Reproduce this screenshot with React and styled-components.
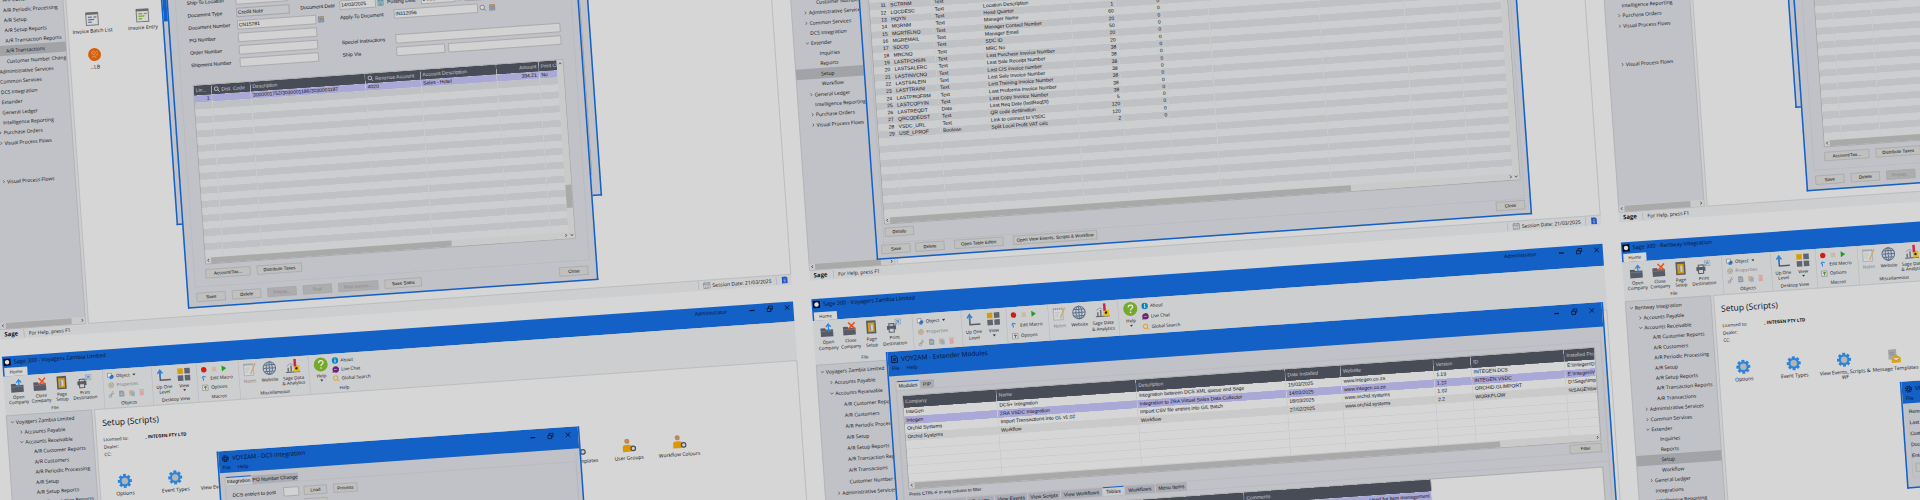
import React from "react";
import styled, { createGlobalStyle, css } from "styled-components";

const c = {
  white: "#d6d6d6",
  ribbon: "#cdced0",
  panel: "#c1c2c7",
  blue: "#1360c6",
  dark: "#484c57",
  light: "#cdcecf",
  stripe: "#c0c1c5",
  picked: "#aaa8d6",
  selected: "#a2a3a7",
  line: "#a4a5a8",
  faint: "#b4b5ba",
  thumb: "#a9a9a9",
  text: "#101116",
};

const ui = `"Open Sans", "Noto Sans", sans-serif`;
const form = `"Liberation Sans", Arial, sans-serif`;

const Global = createGlobalStyle`
  * { box-sizing: border-box; }
  body { margin: 0; background: ${c.white}; overflow: hidden; }
  button, input { font: inherit; color: inherit; margin: 0; }
  ul { list-style: none; margin: 0; padding: 0; }
  a { color: inherit; text-decoration: none; }
`;

/* The wall of desktops: drawn at double size, tilted and shown at half scale. */
const Page = styled.main`
  width: 100%;
  height: 100vh;
  overflow: hidden;
  background: ${c.white};
  color: ${c.text};
  font: 9px/12px ${ui};
`;
const Wall = styled.div`
  display: grid;
  grid-auto-flow: column;
  grid-auto-columns: 82.6vw;
  column-gap: 37px;
  width: max-content;
  transform-origin: 0 0;
  transform: rotate(-4deg) scale(0.5) translate(-46px, -28px);
`;
const Column = styled.div`
  display: flex;
  flex-direction: column;
  gap: ${(p) => p.$gap}px;
  padding-top: ${(p) => p.$top}px;
`;
const Screen = styled.section`
  position: relative;
  display: flex;
  flex-direction: column;
  height: ${(p) => (p.$upper ? 698 : 640)}px;
  background: ${c.ribbon};
`;
const Body = styled.div`
  flex: 1;
  display: flex;
  gap: 5px;
  min-height: 0;
`;
const Side = styled.nav`
  width: 172px;
  display: flex;
  flex-direction: column;
  background: ${c.panel};
  border: 1px solid ${c.line};
  padding-top: ${(p) => p.$top}px;
  font-size: 10px;
`;
const Content = styled.div`
  flex: 1;
  background: ${c.white};
  border: 1px solid ${c.line};
  padding: ${(p) => p.$pad};
`;

const Branch = styled.ul`
  display: flex;
  flex-direction: column;
  height: ${(p) => p.$height}px;
  margin-top: ${(p) => p.$gap || 0}px;
`;
const Leaf = styled.li`
  flex: 1;
  display: flex;
  align-items: center;
  white-space: nowrap;
  overflow: hidden;
  padding-left: ${(p) => 7 + p.$level * 16}px;
  background: ${(p) => (p.$on ? c.selected : "transparent")};
  a { padding-left: 3px; }
`;
const Chevron = styled.svg`
  width: 8px;
  height: 8px;
  flex: none;
  fill: none;
  stroke: #3c3d42;
  stroke-width: 1.2;
`;

function Tree({ items, height, gap }) {
  return (
    <Branch $height={height} $gap={gap}>
      {items.map(([level, text, state, on], i) => (
        <Leaf key={i} $level={level} $on={on}>
          <Chevron viewBox="0 0 8 8">
            {state === "+" && <path d="M3 1l2.5 3L3 7" />}
            {state === "-" && <path d="M1 2.5l3 3 3-3" />}
          </Chevron>
          <a href="#tree">{text}</a>
        </Leaf>
      ))}
    </Branch>
  );
}

/* Scroll bars */
const Bar = styled.div`
  flex: none;
  display: flex;
  align-items: center;
  justify-content: space-between;
  height: 13px;
  margin-top: ${(p) => (p.$end ? "auto" : 0)};
  background: #cacaca;
  svg { width: 11px; height: 9px; flex: none; fill: none; stroke: #3a3a3a; stroke-width: 1.4; }
`;
const Thumb = styled.div`
  width: ${(p) => p.$size};
  height: 12px;
  margin-right: auto;
  background: ${c.thumb};
`;
function HScroll({ size, end }) {
  return (
    <Bar $end={end}>
      <svg viewBox="0 0 8 8"><path d="M5 1.5L3 4l2 2.500" /></svg>
      <Thumb $size={size} />
      <svg viewBox="0 0 8 8"><path d="M3 1.500L5 4 3 6.500" /></svg>
    </Bar>
  );
}
const VBar = styled.div`
  flex: none;
  display: flex;
  flex-direction: column;
  justify-content: space-between;
  align-items: center;
  width: 12px;
  padding: 2px 0;
  background: #cacaca;
  svg { width: 9px; height: 9px; fill: none; stroke: #3a3a3a; stroke-width: 1.4; }
`;
const VThumb = styled.div`
  width: 12px;
  height: 46px;
  margin: auto 0 50px;
  background: ${c.thumb};
`;
function VScroll({ thumb }) {
  return (
    <VBar>
      <svg viewBox="0 0 8 8"><path d="M1.500 5L4 3l2.500 2" /></svg>
      {thumb && <VThumb />}
      <svg viewBox="0 0 8 8"><path d="M1.500 3L4 5l2.500-2" /></svg>
    </VBar>
  );
}

/* Status bar */
const Status = styled.footer`
  display: flex;
  align-items: center;
  height: 20px;
  padding: 0 6px 0 8px;
  white-space: nowrap;
  font-size: 10px;
  strong { font-size: 12px; width: 39px; }
  time { margin: 0 9px 0 4px; }
  svg { width: 15px; height: 14px; }
`;
const Divider = styled.i`
  width: 1px;
  height: 16px;
  background: ${c.line};
  margin-right: 9px;
  margin-left: ${(p) => (p.$push ? "auto" : 0)};
`;
function StatusBar() {
  return (
    <Status>
      <strong>Sage</strong>
      <Divider />
      <span>For Help, press F1</span>
      <Divider $push />
      <svg viewBox="0 0 15 14" fill="none" stroke="#6a6b70">
        <rect x="1" y="2" width="13" height="11" />
        <path d="M1 5h13M4 0v3M11 0v3M4 8h2M8 8h3M4 11h2M8 11h3" />
      </svg>
      <time>Session Date: 21/03/2025</time>
      <Divider />
      <svg viewBox="0 0 15 14">
        <path d="M2 0h8l3 3v11H2z" fill="#2350c0" />
        <path d="M5 5h5M5 8h5M5 11h5" stroke="#cfd6ea" />
      </svg>
    </Status>
  );
}

/* Title bars */
const Head = styled.header`
  height: ${(p) => (p.$tall ? 44 : 40)}px;
  display: flex;
  flex-direction: column;
  justify-content: space-between;
  background: ${c.blue};
  color: #0a1226;
`;
const Caption = styled.div`
  display: flex;
  align-items: center;
  height: 22px;
  padding: 0 6px 0 2px;
  gap: 6px;
  white-space: nowrap;
  font-size: ${(p) => p.$size || 11}px;
`;
const User = styled.span`
  margin-left: auto;
  margin-right: 38px;
  font-size: 10px;
`;
const Buttons = styled.div`
  display: flex;
  gap: 22px;
  margin-left: ${(p) => (p.$push ? "auto" : 0)};
  svg { display: block; width: 13px; height: 13px; fill: none; stroke: #0d1424; stroke-width: 1.5; }
`;
const Bare = styled.button`
  border: 0;
  padding: 0;
  background: none;
`;
function WindowButtons({ push }) {
  return (
    <Buttons $push={push}>
      <Bare aria-label="Minimise"><svg viewBox="0 0 12 12"><path d="M1 7h9" strokeWidth="2.200" /></svg></Bare>
      <Bare aria-label="Restore"><svg viewBox="0 0 12 12"><path d="M1 5h7v6H1zM4 5V1h7v6H8" /></svg></Bare>
      <Bare aria-label="Close"><svg viewBox="0 0 12 12"><path d="M2 2l8 8M10 2l-8 8" /></svg></Bare>
    </Buttons>
  );
}
const Home = styled.button`
  width: 46px;
  height: 17px;
  margin-left: 3px;
  border: 0;
  padding: 0;
  background: ${c.white};
  color: ${c.text};
  line-height: 12px;
`;
const Mark = styled.svg`
  width: 15px;
  height: 15px;
`;

/* Ribbon */
const Strip = styled.div`
  display: flex;
  height: ${(p) => (p.$tall ? 88 : 78)}px;
  background: ${c.ribbon};
  --step: ${(p) => (p.$tall ? 12 : 10)}px;
  --row: ${(p) => (p.$tall ? 21 : 18)}px;
`;
const Group = styled.div`
  display: flex;
  flex-direction: column;
  width: ${(p) => p.$w}px;
  padding-bottom: 3px;
  > span { text-align: center; margin-top: auto; line-height: 12px; }
  & + & { border-left: 1px solid ${c.faint}; }
`;
const Tools = styled.div`
  display: flex;
  padding: 5px 0 0 ${(p) => p.$left || 0}px;
`;
const Tool = styled.button`
  display: flex;
  flex-direction: column;
  align-items: center;
  width: ${(p) => p.$w}px;
  border: 0;
  padding: 0;
  background: none;
  line-height: var(--step);
  opacity: ${(p) => (p.$dim ? 0.5 : 1)};
  svg { width: 30px; height: 30px; margin-bottom: 3px; }
`;
const Stack = styled.div`
  display: flex;
  flex-direction: column;
`;
const Line = styled.button`
  display: flex;
  align-items: center;
  height: var(--row);
  gap: 4px;
  border: 0;
  padding: 0;
  background: none;
  white-space: nowrap;
  opacity: ${(p) => (p.$dim ? 0.5 : 1)};
  svg { width: 14px; height: 14px; }
`;
const Icons = styled.div`
  display: flex;
  align-items: center;
  height: var(--row);
  gap: 6px;
  svg { width: 14px; height: 14px; opacity: ${(p) => (p.$dim ? 0.5 : 1)}; }
`;
const Arrow = styled.i`
  width: 0;
  height: 0;
  margin: 2px;
  border: 3px solid transparent;
  border-top: 4px solid #333;
  border-bottom: 0;
`;

const art = {
  open: (
    <svg viewBox="0 0 30 30"><path d="M1 11h9l2 3h14v14H1z" fill="#565b66" /><path d="M1 17h25" stroke="#8b8f98" /><path d="M17 18V4M12 9l5-6 5 6" fill="none" stroke="#2e86dc" strokeWidth="2.500" /></svg>
  ),
  close: (
    <svg viewBox="0 0 30 30"><path d="M1 11h9l2 3h14v14H1z" fill="#565b66" /><path d="M1 17h25" stroke="#8b8f98" /><path d="M12 3l13 13M25 3L12 16" stroke="#e8501c" strokeWidth="3" /></svg>
  ),
  page: (
    <svg viewBox="0 0 30 30"><path d="M6 2h19v26H6z" fill="#565b66" /><path d="M9 6h13v19H9z" fill="#d99b0a" /><path d="M12 10h7v12h-7z" fill="#cdced0" /><path d="M12 10h3v12h-3z" fill="#8a8e96" /></svg>
  ),
  print: (
    <svg viewBox="0 0 30 30"><path d="M1 15h18v8H1z" fill="#565b66" /><path d="M5 11h10v5H5zM5 20h10v8H5z" fill="#cdced0" stroke="#565b66" strokeWidth="2" /><path d="M18 3h11v10H18z" fill="none" stroke="#6f7f96" strokeDasharray="3 1" /><path d="M16 15l9-9M20 6h5v5" fill="none" stroke="#3d7fc4" strokeWidth="1.500" /></svg>
  ),
  up: (
    <svg viewBox="0 0 30 30"><path d="M8 6v18h21" fill="none" stroke="#565b66" strokeWidth="3" /><path d="M8 19V5M3 11l5-7 5 7" fill="none" stroke="#2e86dc" strokeWidth="3" /></svg>
  ),
  view: (
    <svg viewBox="0 0 30 30"><path d="M3 3h11v11H3z" fill="#d99b0a" /><path d="M17 3h11v11H17zM3 17h11v11H3zM17 17h11v11H17z" fill="#5f646e" /></svg>
  ),
  notes: (
    <svg viewBox="0 0 30 30"><path d="M4 5h19v22H4z" fill="#dcdcdc" stroke="#7f838c" strokeWidth="1.500" /><path d="M4 5h19" stroke="#565b66" strokeWidth="4" strokeDasharray="2 2" /><path d="M7 12h10M7 16h8M7 20h6" stroke="#8d9098" /><path d="M27 3L17 24" stroke="#c98a1b" strokeWidth="3" /></svg>
  ),
  web: (
    <svg viewBox="0 0 30 30" fill="none" stroke="#5d6f86" strokeWidth="2"><circle cx="15" cy="15" r="12.500" fill="#c3ccd6" /><ellipse cx="15" cy="15" rx="6" ry="12.500" /><path d="M3 15h24M5 8.500h20M5 21.500h20M15 3v24" /></svg>
  ),
  data: (
    <svg viewBox="0 0 30 30"><path d="M1 26h28" stroke="#565b66" strokeWidth="2" /><path d="M4 17h3v8H4zM10 13h3v12h-3z" fill="#6d727c" /><path d="M17 13h11v13H17z" fill="#e2b81c" /><path d="M17 0h5v15h-5z" fill="#d0244d" /><circle cx="22" cy="19" r="2.500" fill="#2b2620" /><path d="M3 13l7-4 5 2" fill="none" stroke="#6d727c" /></svg>
  ),
  help: (
    <svg viewBox="0 0 30 30"><circle cx="15" cy="15" r="14" fill="#76a82c" /><path d="M11 12c0-6 9-6 9-1 0 4-5 3-5 7" fill="none" stroke="#e8eedd" strokeWidth="2.600" /><circle cx="15" cy="22" r="1.700" fill="#e8eedd" /></svg>
  ),
};

function Ribbon({ tall }) {
  return (
    <Strip $tall={tall}>
      <Group $w={198}>
        <Tools $left={6}>
          <Tool $w={44}>{art.open}Open<br />Company</Tool>
          <Tool $w={46}>{art.close}Close<br />Company</Tool>
          <Tool $w={38}>{art.page}Page<br />Setup</Tool>
          <Tool $w={54}>{art.print}Print<br />Destination</Tool>
        </Tools>
        <span>File</span>
      </Group>
      <Group $w={98}>
        <Tools $left={8}>
          <Stack>
            <Line>
              <svg viewBox="0 0 14 14"><path d="M1 1h8v8H1z" fill="#e8e8e8" stroke="#565b66" /><path d="M5 7h6v6H5z" fill="#2e86dc" /><circle cx="10" cy="8" r="3.500" fill="#2e70b8" /></svg>
              Object <Arrow />
            </Line>
            <Line $dim>
              <svg viewBox="0 0 14 14"><circle cx="7" cy="7" r="4.500" fill="none" stroke="#a07828" strokeWidth="3" strokeDasharray="2.500 1" /><circle cx="7" cy="7" r="3" fill="#909090" /></svg>
              Properties
            </Line>
            <Icons $dim>
              <svg viewBox="0 0 14 14"><path d="M10 1L5 9M12 5L6 9" stroke="#555" strokeWidth="1.500" /><circle cx="4" cy="11" r="2.500" fill="none" stroke="#555" strokeWidth="1.500" /></svg>
              <svg viewBox="0 0 14 14"><path d="M2 1h7l3 3v9H2z" fill="#50617a" /><path d="M4 6h6M4 9h6" stroke="#ddd" /></svg>
              <svg viewBox="0 0 14 14"><path d="M2 2h9v10H2z" fill="#d68a24" /><path d="M6 5h7v9H6z" fill="#4c8fd0" /></svg>
              <svg viewBox="0 0 14 14"><path d="M3 4h8v10H3zM2 1h10v2H2z" fill="#e07f70" /></svg>
            </Icons>
          </Stack>
        </Tools>
        <span>Objects</span>
      </Group>
      <Group $w={90}>
        <Tools>
          <Tool $w={46}>{art.up}Up One<br />Level</Tool>
          <Tool $w={34}>{art.view}View<Arrow /></Tool>
        </Tools>
        <span>Desktop View</span>
      </Group>
      <Group $w={84}>
        <Tools $left={8}>
          <Stack>
            <Icons>
              <svg viewBox="0 0 14 14"><circle cx="6" cy="7" r="5.500" fill="#d81c0c" /></svg>
              <svg viewBox="0 0 14 14"><path d="M2 3h9v9H2z" fill="#c9bba8" /></svg>
              <svg viewBox="0 0 14 14"><path d="M2 1l9 6-9 6z" fill="#1ea01c" /></svg>
            </Icons>
            <Line>
              <svg viewBox="0 0 14 14"><path d="M4 11V5M1 6l3-4 5 2" fill="none" stroke="#2e86dc" strokeWidth="2" /></svg>
              Edit Macro
            </Line>
            <Line>
              <svg viewBox="0 0 14 14"><path d="M1 2h11v11H1z" fill="#d8d8d8" stroke="#777" /><path d="M7 4v7M4 6h6" stroke="#4d8a2b" strokeWidth="2" /></svg>
              Options
            </Line>
          </Stack>
        </Tools>
        <span>Macros</span>
      </Group>
      <Group $w={140}>
        <Tools>
          <Tool $w={42} $dim>{art.notes}Notes</Tool>
          <Tool $w={38}>{art.web}Website</Tool>
          <Tool $w={56}>{art.data}Sage Data<br />&amp; Analytics</Tool>
        </Tools>
        <span>Miscellaneous</span>
      </Group>
      <Group $w={138}>
        <Tools $left={2}>
          <Tool $w={44}>{art.help}Help<Arrow /></Tool>
          <Stack>
            <Line>
              <svg viewBox="0 0 14 14"><circle cx="7" cy="7" r="6.500" fill="#0b86bc" /><path d="M7 6v5M7 3v2" stroke="#e6eef2" strokeWidth="2" /></svg>
              About
            </Line>
            <Line>
              <svg viewBox="0 0 14 14"><path d="M7 .500a6.500 6.500 0 1 1-3 12L.500 13.500l.700-4A6.500 6.500 0 0 1 7 .500z" fill="#6e2377" /><path d="M4 7h6" stroke="#e6dce8" strokeWidth="1.500" strokeDasharray="1.500 1" /></svg>
              Live Chat
            </Line>
            <Line>
              <svg viewBox="0 0 14 14" fill="none" stroke="#dc9a1a" strokeWidth="1.800"><circle cx="6" cy="6" r="4.500" /><path d="M9 9l4 4.500" /></svg>
              Global Search
            </Line>
          </Stack>
        </Tools>
        <span>Help</span>
      </Group>
    </Strip>
  );
}

function SageHead({ title, tall }) {
  return (
    <Head $tall={tall}>
      <Caption>
        <Mark viewBox="0 0 15 15"><path d="M0 0h15v15H0z" fill="#0a0d12" /><circle cx="7.500" cy="7.500" r="4.500" fill="#dfe3e6" /></Mark>
        <span>{title}</span>
        <User>Administrator</User>
        <WindowButtons />
      </Caption>
      <Home>Home</Home>
    </Head>
  );
}

/* Desktop icons */
const Heading = styled.h1`
  margin: 0;
  font: 400 17px/24px ${ui};
`;
const Licence = styled.dl`
  display: grid;
  grid-template-columns: 84px auto;
  grid-auto-rows: 15px;
  margin: 16px 0 31px;
  dt, dd { margin: 0; }
  dt { grid-column: 1; }
  dd { font-weight: 700; grid-column: 2; grid-row: 1; }
`;
const Shelf = styled.ul`
  display: grid;
  grid-auto-flow: column;
  grid-auto-columns: 101px;
  margin-left: -14px;
  margin-bottom: ${(p) => p.$gap || 0}px;
  font-size: 10px;
`;
const Shortcut = styled.li`
  display: flex;
  flex-direction: column;
  align-items: center;
  text-align: center;
  line-height: 10px;
  margin: 0 -6px;
  svg { width: 30px; height: 30px; margin-bottom: 4px; }
`;
const teeth = [0, 45, 90, 135, 180, 225, 270, 315];
const Gear = () => (
  <svg viewBox="0 0 30 30">
    {teeth.map((a) => (
      <path key={a} d="M12 1h6v6h-6z" fill="#2c84da" transform={`rotate(${a} 15 15)`} />
    ))}
    <circle cx="15" cy="15" r="8.500" fill="#b5b5b5" stroke="#2c84da" strokeWidth="4" />
  </svg>
);
const Person = () => (
  <svg viewBox="0 0 30 30">
    <circle cx="12" cy="6" r="5" fill="#bb8a58" />
    <path d="M3 27V17q0-4 5-4h8q5 0 5 4v10z" fill="#dc9804" />
    <circle cx="24" cy="21" r="4.500" fill="#cfcfcf" stroke="#4c5058" strokeWidth="2.500" />
  </svg>
);
const Mail = () => (
  <svg viewBox="0 0 30 30">
    <path d="M3 1h16v20H3z" fill="#a5a6a8" />
    <path d="M6 7h9M6 11h9" stroke="#74767a" />
    <path d="M9 18l9-6 9 6v10H9z" fill="#dda016" />
    <path d="M10 19l8 5 8-5" fill="#dcdcdc" stroke="#b07d10" />
  </svg>
);
const Sheet = ({ tone }) => (
  <svg viewBox="0 0 30 30">
    <path d="M3 3h24v25H3z" fill="#d4d5d2" stroke="#77797c" strokeWidth="2" />
    <path d="M3 5h24" stroke="#66686c" strokeWidth="4" />
    <path d="M7 12h8M7 17h12M7 22h7M18 12h6" stroke={tone} strokeWidth="2.500" />
  </svg>
);
const Ball = () => (
  <svg viewBox="0 0 30 30">
    <circle cx="15" cy="15" r="13" fill="#d4600f" />
    <path d="M9 10l5-2 3 4-4 4zM17 17l5-3M10 20l5-2 3 4M19 8l3 3" fill="none" stroke="#e9a877" strokeWidth="1.500" />
  </svg>
);

const modules = [
  ["Options", Gear], ["Event Types", Gear], ["View Events, Scripts & WF", Gear], ["Message Templates", Mail],
  ["Reports", Gear], ["Scripts", Gear], ["Tables", Gear], ["Modules", Gear], ["Profiles", Gear],
  ["Users Templates", Person], ["User Groups", Person], ["Workflow Colours", Person],
];

function SetupContent() {
  return (
    <Content $pad="15px 0 0 13px">
      <Heading>Setup (Scripts)</Heading>
      <Licence>
        <dt>Licensed to:</dt><dd>, INTEGEN PTY LTD</dd>
        <dt>Dealer:</dt>
        <dt>CC:</dt>
      </Licence>
      <Shelf>
        {modules.map(([name, Icon]) => (
          <Shortcut key={name}><Icon />{name}</Shortcut>
        ))}
      </Shelf>
    </Content>
  );
}

/* Application windows on the desktops */
const Window = styled.section`
  position: absolute;
  left: ${(p) => p.$x}px;
  top: ${(p) => p.$y}px;
  width: ${(p) => p.$w}px;
  height: ${(p) => p.$h}px;
  display: flex;
  flex-direction: column;
  border: 3px solid ${c.blue};
  border-top: 0;
  background: ${c.panel};
  font-family: ${form};
  overflow: hidden;
`;
const WindowHead = styled.header`
  flex: none;
  height: ${(p) => p.$h}px;
  padding: ${(p) => p.$pad || 0}px 8px 0 4px;
  background: ${c.blue};
  color: #0a1226;
  font-family: ${ui};
`;
const Menu = styled.div`
  display: flex;
  gap: 14px;
  padding-left: 3px;
  font-size: 10px;
  line-height: 14px;
`;
function DialogHead({ title, height, pad, size, page }) {
  return (
    <WindowHead $h={height} $pad={pad}>
      <Caption $size={size}>
        <Mark viewBox="0 0 16 16" fill="none" stroke="#0b1730" strokeWidth="2">
          {page ? <path d="M2 1h8l4 4v10H2zM5 7h6M5 10h6" /> : (
            <>
              <circle cx="8" cy="8" r="6" strokeWidth="3" strokeDasharray="3 1.700" />
              <circle cx="8" cy="8" r="3" />
            </>
          )}
        </Mark>
        <span>{title}</span>
        <WindowButtons push />
      </Caption>
      <Menu><Bare>File</Bare><Bare>Help</Bare></Menu>
    </WindowHead>
  );
}
const Frame = styled.div`
  display: flex;
  flex-direction: column;
  flex: ${(p) => (p.$grow ? 1 : "none")};
  margin: ${(p) => p.$margin};
  padding: ${(p) => p.$pad};
  border: 1px solid ${c.faint};
  border-top-width: ${(p) => (p.$top ? 1 : 0)}px;
`;
const Actions = styled.div`
  display: flex;
  gap: ${(p) => p.$gap || 13}px;
  margin: ${(p) => p.$margin};
`;
const Push = styled.button`
  flex: none;
  width: ${(p) => p.$w || 58}px;
  height: 18px;
  padding: 0;
  margin-left: ${(p) => (p.$end ? "auto" : 0)};
  border: 1px solid #9a9b9d;
  background: #c0c0bf;
  font-size: 9px;
  line-height: 14px;
  white-space: nowrap;
  ${(p) => p.disabled && css`background: #adadae; border-color: #a4a4a5; color: #85868a;`}
`;

/* Forms */
const Fields = styled.div`
  display: flex;
  align-items: center;
  height: 25px;
  white-space: nowrap;
  font-size: 10px;
`;
const Cell = styled.div`
  display: flex;
  align-items: center;
  width: ${(p) => (p.$w ? `${p.$w}px` : "auto")};
  flex: none;
`;
const Label = styled.label`
  width: ${(p) => p.$w}px;
  flex: none;
  padding-left: ${(p) => p.$pad || 0}px;
`;
const Box = styled.input`
  flex: none;
  width: ${(p) => p.$w}px;
  height: 18px;
  padding: 0 2px;
  margin-right: ${(p) => p.$after || 0}px;
  border: 1px solid #88898c;
  background: ${(p) => (p.$off ? "#c3c4c8" : "#d2d2d2")};
  border-radius: 0;
  outline: 0;
`;
const Glyph = styled.svg`
  width: 14px;
  height: 14px;
  flex: none;
  margin: 0 2px 0 3px;
`;
const Lens = () => (
  <Glyph viewBox="0 0 14 14" fill="none" stroke="#707378" strokeWidth="1.500"><circle cx="6" cy="6" r="4.500" fill="#d6d6d6" /><path d="M9.500 9.500l3.500 3.500" /></Glyph>
);
const Calendar = () => (
  <Glyph viewBox="0 0 14 14"><path d="M2 2h10v11H2z" fill="#b8d0d4" stroke="#3d7078" /><path d="M2 4h10M4 8h6M4 10.500h6" stroke="#2c7784" strokeWidth="1.500" /></Glyph>
);
const Drill = () => (
  <Glyph viewBox="0 0 14 14"><path d="M2 2h10v11H2z" fill="#a8aebc" stroke="#555c6e" /><path d="M4 6h6M4 9h6" stroke="#444c66" /><path d="M7 1h6v3H7z" fill="#c8913e" /></Glyph>
);

/* Tables */
const Sheetbox = styled.div`
  display: flex;
  width: ${(p) => p.$w};
  flex: none;
  border: 1px solid #88898b;
  background: ${c.light};
`;
const Pane = styled.div`
  flex: 1;
  min-width: 0;
  overflow: hidden;
`;
const Table = styled.table`
  width: 100%;
  height: ${(p) => p.$h}px;
  table-layout: fixed;
  border-collapse: collapse;
  font-size: ${(p) => p.$size || 9}px;
  line-height: 10px;
  white-space: nowrap;
  th, td { padding: 0 4px; overflow: hidden; text-align: left; font-weight: 400; }
  th { height: ${(p) => p.$head}px; background: ${c.dark}; color: #c8cbd0; border-right: 1px solid #7a7d86; }
  th svg { width: 12px; height: 12px; vertical-align: -2px; margin-right: 4px; fill: none; stroke: #d2d4d8; stroke-width: 1.6; }
  td { height: ${(p) => p.$row || 14}px; border-right: 1px solid #c6c7c9; }
  .end { text-align: right; }
`;
const Row = styled.tr`
  background: ${(p) => ({ on: c.picked, dark: c.stripe, grey: "#cacaca", white: c.white }[p.$tone] || c.light)};
  ${(p) => p.$ruled && css`td { border-bottom: 1px solid #cbcbcc; }`}
`;
const Cols = ({ widths }) => (
  <colgroup>{widths.map((w, i) => <col key={i} style={{ width: w }} />)}</colgroup>
);
const Find = () => <svg viewBox="0 0 12 12"><circle cx="5" cy="5" r="3.800" /><path d="M8 8l3.500 3.500" /></svg>;

/* Tabs */
const Tabs = styled.div`
  display: flex;
  align-items: flex-end;
  gap: 2px;
  height: 18px;
  padding-left: ${(p) => p.$left}px;
  font-size: 10px;
`;
const Tab = styled.button`
  width: ${(p) => p.$w}px;
  height: ${(p) => (p.$on ? 18 : 17)}px;
  padding: 0;
  border: 0;
  border-top: ${(p) => (p.$on ? `2px solid ${c.blue}` : 0)};
  background: ${(p) => (p.$on ? "#c9cacd" : "#abacb3")};
  line-height: 14px;
  white-space: nowrap;
`;

function InvoiceWindow({ id }) {
  const f = (n) => `${id}-${n}`;
  const cols = [35, 78, 230, 111, 152, 85, 37];
  return (
    <Window $x={378} $y={0} $w={823} $h={662}>
      <WindowHead $h={24} />
      <Frame $grow $margin="0 12px 0 14px" $pad="16px 0 0 22px">
        <Fields>
          <Cell $w={286}>
            <Label $w={98} htmlFor={f("ship")}>Ship-To Location</Label>
            <Box $w={104} id={f("ship")} />
            <Lens />
            <Glyph viewBox="0 0 14 14"><path d="M7 1v12M1 7h12" stroke="#3f9a3c" strokeWidth="3" /></Glyph>
            <Glyph viewBox="0 0 14 14"><circle cx="7" cy="7" r="6" fill="#1f73c8" /><path d="M7 6v5M7 3v2" stroke="#e2e8ee" strokeWidth="2" /></Glyph>
          </Cell>
          <Box $w={140} $off aria-label="Location" />
        </Fields>
        <Fields>
          <Cell $w={226}>
            <Label $w={98} htmlFor={f("type")}>Document Type</Label>
            <Box $w={106} $off id={f("type")} defaultValue="Credit Note" />
          </Cell>
          <Label $w={79} htmlFor={f("date")}>Document Date</Label>
          <Box $w={72} id={f("date")} defaultValue="14/03/2025" />
          <Calendar />
          <Label $w={72} $pad={4} htmlFor={f("post")}>Posting Date</Label>
          <Box $w={68} id={f("post")} defaultValue="14/03/2025" />
          <Calendar />
          <Box $w={50} $off $after={8} aria-label="Period" defaultValue="2025 - 03" />
          <Label $w={56} htmlFor={f("cur")}>Currency</Label>
          <Box $w={56} $off id={f("cur")} />
        </Fields>
        <Fields>
          <Cell $w={304}>
            <Label $w={98} htmlFor={f("num")}>Document Number</Label>
            <Box $w={158} id={f("num")} defaultValue="CN15781" />
            <Drill />
          </Cell>
          <Label $w={108} htmlFor={f("apply")}>Apply-To Document</Label>
          <Box $w={168} id={f("apply")} defaultValue="IN112056" />
          <Lens />
          <Drill />
        </Fields>
        <Fields>
          <Label $w={98} htmlFor={f("po")}>PO Number</Label>
          <Box $w={158} id={f("po")} />
        </Fields>
        <Fields>
          <Cell $w={304}>
            <Label $w={98} htmlFor={f("order")}>Order Number</Label>
            <Box $w={158} id={f("order")} />
          </Cell>
          <Label $w={108} htmlFor={f("special")}>Special Instructions</Label>
          <Box $w={330} id={f("special")} />
        </Fields>
        <Fields>
          <Cell $w={304}>
            <Label $w={98} htmlFor={f("shipno")}>Shipment Number</Label>
            <Box $w={158} id={f("shipno")} />
          </Cell>
          <Label $w={108} htmlFor={f("via")}>Ship Via</Label>
          <Box $w={97} $after={7} id={f("via")} />
          <Box $w={226} aria-label="Ship via description" />
        </Fields>
        <Actions $gap={0} $margin="27px 0 10px 1px">
          <Sheetbox $w="742px">
            <Pane>
              <Table $h={344} $head={20} $size={10}>
                <Cols widths={cols} />
                <thead>
                  <tr>
                    <th>Lin...</th><th><Find />Dist. Code</th><th>Description</th><th><Find />Revenue Account</th>
                    <th>Account Description</th><th className="end">Amount</th><th>Print Co</th>
                  </tr>
                </thead>
                <tbody>
                  <Row $tone="on">
                    <td className="end">1</td><td /><td>3000001752/3030001186/3030001187</td><td>4020</td>
                    <td>Sales - Hotel</td><td className="end">394.21</td><td>No</td>
                  </Row>
                  {Array.from({ length: 22 }, (_, i) => (
                    <Row key={i} $tone={i % 2 ? "" : "dark"}>{cols.map((w, k) => <td key={k} />)}</Row>
                  ))}
                </tbody>
              </Table>
              <HScroll size="482px" />
            </Pane>
            <VScroll thumb />
          </Sheetbox>
        </Actions>
        <Actions $margin="0">
          <Push $w={90}>Account/Tax...</Push>
          <Push $w={90}>Distribute Taxes</Push>
        </Actions>
      </Frame>
      <Actions $margin="11px 16px 9px">
        <Push>Save</Push>
        <Push>Delete</Push>
        <Push disabled>Prepay...</Push>
        <Push disabled>Post</Push>
        <Push disabled $w={80}>Post Invoice...</Push>
        <Push $w={74}>Save Sales</Push>
        <Push $end>Close</Push>
      </Actions>
    </Window>
  );
}

const rows = [
  ["", "", "", "", "", ""],
  [11, "SCTRNM", "Text", "Sector Name", 60, 0],
  [12, "LOCDESC", "Text", "Location Description", 100, 0],
  [13, "HQYN", "Text", "Head Quarter", 1, 0],
  [14, "MGRNM", "Text", "Manager Name", 60, 0],
  [15, "MGRTELNO", "Text", "Manager Contact Number", 20, 0],
  [16, "MGREMAIL", "Text", "Manager Email", 50, 0],
  [17, "SDCID", "Text", "SDC ID", 20, 0],
  [18, "MRCNO", "Text", "MRC No", 20, 0],
  [19, "LASTPCHSIN", "Text", "Last Purchase Invoice Number", 38, 0],
  [20, "LASTSALERC", "Text", "Last Sale Receipt Number", 38, 0],
  [21, "LASTINVCNO", "Text", "Last CIS invoice number", 38, 0],
  [22, "LASTSALEIN", "Text", "Last Sale Invoice Number", 38, 0],
  [23, "LASTTRAINI", "Text", "Last Training Invoice Number", 38, 0],
  [24, "LASTPROFRM", "Text", "Last Proforma Invoice Number", 38, 0],
  [25, "LASTCOPYIN", "Text", "Last Copy Invoice Number", 38, 0],
  [26, "LASTREQDT", "Date", "Last Req Date (lastReqDt)", 5, 0],
  [27, "QRCODEDST", "Text", "QR code destination", 120, 0],
  [28, "VSDC_URL", "Text", "Link to connect to VSDC", 120, 0],
  [29, "USE_LPROF", "Boolean", "Split Local Profit VAT calc", 2, 0],
  ...Array.from({ length: 11 }, () => ["", "", "", "", "", ""]),
];

function TableWindow() {
  return (
    <Window $x={136} $y={74} $w={1314} $h={592}>
      <WindowHead $h={40} />
      <Frame $grow $margin="0 10px 0 13px" $pad="3px 5px 0 3px">
        <Sheetbox $w="100%">
          <Pane>
            <Table $h={464} $head={20} $size={10}>
              <Cols widths={[37, 88, 97, 179, 90, 92, 93, 221, 170, 106, 88]} />
              <thead>
                <tr><th>No.</th><th>Field</th><th>Type</th><th>Description</th><th>Length</th><th>Decimals</th><th /><th /><th /><th /><th /></tr>
              </thead>
              <tbody>
                {rows.map(([n, name, type, text, size, dec], i) => (
                  <Row key={i} $tone={i % 2 ? "dark" : ""}>
                    <td className="end">{n}</td><td>{name}</td><td>{type}</td><td>{text}</td>
                    <td className="end">{size}</td><td className="end">{dec}</td>
                    <td /><td /><td /><td /><td />
                  </Row>
                ))}
              </tbody>
            </Table>
            <HScroll size="924px" />
          </Pane>
          <VScroll />
        </Sheetbox>
        <Actions $margin="7px 0 0"><Push>Details</Push></Actions>
      </Frame>
      <Actions $margin="3px 10px 8px 8px" $gap={20}>
        <Actions $gap={10}>
          <Push>Save</Push>
          <Push>Delete</Push>
        </Actions>
        <Push $w={98}>Open Table Editor</Push>
        <Push $w={168}>Open View Events, Scripts &amp; Workflow</Push>
        <Push $end>Close</Push>
      </Actions>
    </Window>
  );
}

function IntegrationWindow() {
  return (
    <Window $x={415} $y={219} $w={727} $h={360}>
      <DialogHead title="VOYZAM - DCS Integration" height={44} pad={4} size={12} />
      <Frame $margin="8px 7px 0 9px" $pad="0">
        <Tabs $left={2}>
          <Tab $on $w={50}>Integration</Tab>
          <Tab $w={92}>PO Number Change</Tab>
        </Tabs>
        <Frame $top $margin="0" $pad="6px 0 200px 12px">
          <Fields>
            <Label $w={102} htmlFor="entries">DCS entries to post</Label>
            <Box $w={31} $after={10} id="entries" />
            <Actions><Push $w={46}>Load</Push><Push $w={48}>Process</Push></Actions>
          </Fields>
          <Fields>
            <Cell $w={143} />
            <Actions><Push $w={46}>Clear</Push></Actions>
          </Fields>
        </Frame>
      </Frame>
    </Window>
  );
}

const packs = [
  ["InteGen", "DCS+ Integration", "Integration between DCS XML queue and Sage", "15/03/2025", "www.integen.co.za", "1.19", "INTEGEN.DCS", "E:\\Integen\\D"],
  ["Integen", "ZRA VSDC Integration", "Integration to ZRA Virtual Sales Data Collector", "14/03/2025", "www.integen.co.za", "1.22", "INTEGEN.VSDC", "E:\\Integen\\V"],
  ["Orchid Systems", "Import Transactions into GL v1.02", "Import CSV file entries into G/L Batch", "18/03/2025", "www.orchid.systems", "1.02", "ORCHID.GLIMPORT", "D:\\Sage\\Imp"],
  ["Orchid Systems", "Workflow", "Workflow", "27/02/2025", "www.orchid.systems", "2.2", "WORKFLOW", "%SAGE%\\wf"],
];
const tones = ["white", "on", "white", "grey"];

const LowerTable = styled.div`
  background: ${c.white};
  border: 1px solid #88898b;
  padding-right: 344px;
`;

function ModulesWindow() {
  return (
    <Window $x={141} $y={116} $w={1438} $h={520}>
      <DialogHead title="VOYZAM - Extender Modules" height={49} pad={4} size={13} page />
      <Frame $margin="11px 6px 0 12px" $pad="0">
        <Tabs $left={2}>
          <Tab $on $w={44}>Modules</Tab>
          <Tab $w={28}>PIP</Tab>
        </Tabs>
        <Frame $top $margin="0" $pad="10px 12px 0 10px">
          <Sheetbox $w="100%">
            <Pane>
              <Table $h={173} $head={24} $row={16} $size={10}>
                <Cols widths={[187, 280, 299, 111, 186, 75, 187, 61]} />
                <thead>
                  <tr><th>Company</th><th>Name</th><th>Description</th><th>Date Installed</th><th>Website</th><th>Version</th><th>ID</th><th>Installed Fro</th></tr>
                </thead>
                <tbody>
                  {packs.map((p, i) => (
                    <Row key={i} $tone={tones[i]}>{p.map((t, k) => <td key={k}>{t}</td>)}</Row>
                  ))}
                  {[0, 1, 2, 3, 4].map((i) => (
                    <Row key={i} $tone="white" $ruled>{packs[0].map((t, k) => <td key={k} />)}</Row>
                  ))}
                </tbody>
              </Table>
              <HScroll size="1174px" />
            </Pane>
          </Sheetbox>
          <Actions $margin="4px 0 0">
            <span>Press CTRL-F in any column to filter</span>
            <Push $w={64} $end>Filter</Push>
          </Actions>
        </Frame>
        <Tabs $left={14}>
          <Tab $w={54}>Details</Tab>
          <Tab $w={54}>Forms</Tab>
          <Tab $w={54}>Reports</Tab>
          <Tab $w={64}>View Events</Tab>
          <Tab $w={64}>View Scripts</Tab>
          <Tab $w={82}>View Workflows</Tab>
          <Tab $w={42} $on>Tables</Tab>
          <Tab $w={60}>Workflows</Tab>
          <Tab $w={62}>Menu Items</Tab>
        </Tabs>
        <Frame $top $margin="0" $pad="10px 12px 0 10px">
          <LowerTable>
            <Table $h={80} $head={24} $size={10}>
              <Cols widths={[240, 425, 374]} />
              <thead><tr><th>Table</th><th>Description</th><th>Comments</th></tr></thead>
              <tbody>
                <Row $tone="on"><td>VSDCITEM</td><td /><td className="end">Used for item management</td></Row>
                <Row $tone="white" $ruled><td /><td /><td /></Row>
                <Row $tone="white" $ruled><td /><td /><td /></Row>
              </tbody>
            </Table>
          </LowerTable>
        </Frame>
      </Frame>
    </Window>
  );
}

const RentRow = styled(Fields)`
  height: 22px;
`;
function RentwayWindow() {
  return (
    <Window $x={537} $y={317} $w={360} $h={214}>
      <DialogHead title="VOYZAM - Rentway" height={44} pad={4} size={12} />
      <Frame $margin="0 10px" $pad="6px 0">
        {["Remove From", "Last Number", "Customer", "Document", "Entered By"].map((t) => (
          <RentRow key={t}>
            <Label $w={110} htmlFor={t}>{t}</Label>
            <Box $w={120} id={t} />
          </RentRow>
        ))}
        <Actions $margin="4px 6px"><Push>Run</Push></Actions>
      </Frame>
    </Window>
  );
}

/* Trees */
const ledger = [
  [2, "A/R Customers"], [2, "A/R Periodic Processing"], [2, "A/R Setup"], [2, "A/R Setup Reports"], [2, "A/R Transaction Reports"],
];
const upperTree = [
  ...ledger, [2, "A/R Transactions", "", true], [2, "Customer Number Chang"],
  [1, "Administrative Services", "+"], [1, "Common Services", "+"], [1, "DCS Integration"], [1, "Extender", "+"],
  [1, "General Ledger", "+"], [1, "Intelligence Reporting"], [1, "Purchase Orders", "+"], [1, "Visual Process Flows", "+"],
];
const extenderTree = [
  ...ledger, [2, "A/R Transactions"], [2, "Customer Number Chang"],
  [1, "Administrative Services", "+"], [1, "Common Services", "+"], [1, "DCS Integration"], [1, "Extender", "-"],
  [2, "Inquiries"], [2, "Reports"], [2, "Setup", "", true], [2, "Workflow"],
  [1, "General Ledger", "+"], [1, "Intelligence Reporting"], [1, "Purchase Orders", "+"], [1, "Visual Process Flows", "+"],
];
const lowerTree = (root) => [
  [0, root, "-"], [1, "Accounts Payable", "+"], [1, "Accounts Receivable", "-"], [2, "A/R Customer Reports"], ...ledger,
  [2, "A/R Transactions"],
];
const voyagers = [
  ...lowerTree("Voyagers Zambia Limited"), [2, "Customer Number Chang"], [1, "Administrative Services", "+"], [1, "Common Services", "+"],
];
const rentway = [
  ...lowerTree("Rentway Integration"), [1, "Administrative Services", "+"], [1, "Common Services", "+"], [1, "Extender", "-"],
  [2, "Inquiries"], [2, "Reports"], [2, "Setup", "", true], [2, "Workflow"], [1, "General Ledger", "+"], [1, "Integrations"],
  [1, "Intelligence Reporting"],
];

const BackFrame = styled(Frame)`
  border-color: #8d8e92;
`;

function InvoiceScreen({ id }) {
  return (
    <Screen $upper>
      <Body>
        <Side $top={9}>
          <Tree items={upperTree} height={306} />
          <Tree items={[[1, "Visual Process Flows", "+"]]} height={20} gap={57} />
          <HScroll size="132px" end />
        </Side>
        <Content $pad="54px 0 0 12px">
          <Shelf $gap={28}>
            <Shortcut><Sheet tone="#6470a8" />Invoice Batch List</Shortcut>
            <Shortcut><Sheet tone="#74a828" />Invoice Entry</Shortcut>
          </Shelf>
          <Shelf>
            <Shortcut><Ball />...LB</Shortcut>
          </Shelf>
        </Content>
      </Body>
      <StatusBar />
      <Window $x={367} $y={0} $w={853} $h={494}>
        <WindowHead $h={86} />
        <BackFrame $grow $margin="4px 14px 40px 8px" $pad="0" />
      </Window>
      <InvoiceWindow id={id} />
    </Screen>
  );
}

function SetupScreen({ title, tree, height, tall, children }) {
  return (
    <Screen>
      <SageHead title={title} tall={tall} />
      <Ribbon tall={tall} />
      <Body>
        <Side $top={3}><Tree items={tree} height={height} /></Side>
        <SetupContent />
      </Body>
      {children}
    </Screen>
  );
}

export default function App() {
  return (
    <Page>
      <Global />
      <Wall>
        <Column $top={8} $gap={34}>
          <InvoiceScreen id="a" />
          <SetupScreen title="Sage 300 - Voyagers Zambia Limited" tree={voyagers} height={265}>
            <IntegrationWindow />
          </SetupScreen>
        </Column>
        <Column $top={3} $gap={37}>
          <Screen $upper>
            <Body>
              <Side $top={9}>
                <Tree items={extenderTree} height={388} />
                <HScroll size="132px" end />
              </Side>
              <Content $pad="0" />
            </Body>
            <StatusBar />
            <TableWindow />
          </Screen>
          <SetupScreen title="Sage 300 - Voyagers Zambia Limited" tree={voyagers} height={288} tall>
            <ModulesWindow />
          </SetupScreen>
        </Column>
        <Column $top={0} $gap={40}>
          <InvoiceScreen id="b" />
          <SetupScreen title="Sage 300 - Rentway Integration" tree={rentway} height={408}>
            <RentwayWindow />
          </SetupScreen>
        </Column>
      </Wall>
    </Page>
  );
}
